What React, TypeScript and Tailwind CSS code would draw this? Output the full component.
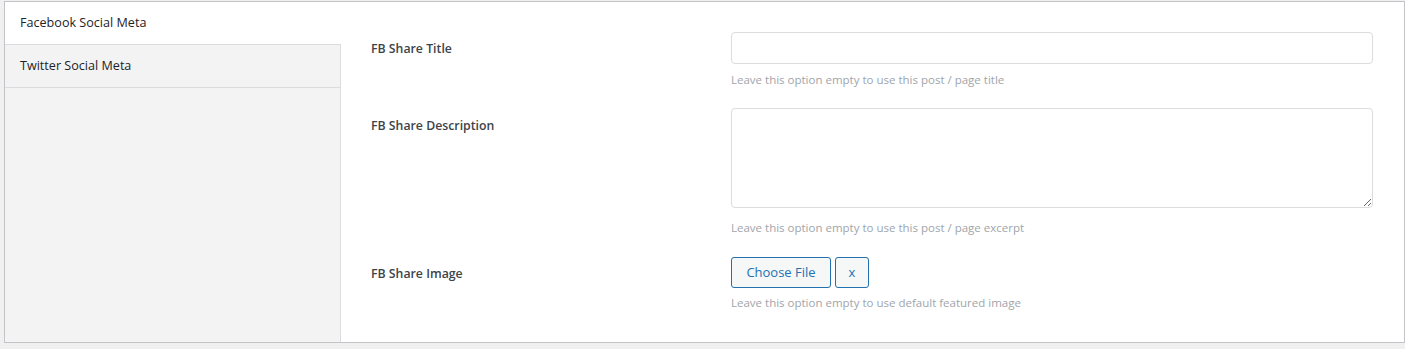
import clsx from 'clsx';

/**
 * Social meta box: vertical tabs on the left, the Facebook fields on the right.
 */

const TABS = ['Facebook Social Meta', 'Twitter Social Meta'];

function Tab({ label, active }: { label: string; active?: boolean }) {
  return (
    <div
      className={clsx(
        'flex h-[43px] items-center border-b border-[#dcdcde] pt-px pl-[15px] text-[12.6px] text-[#1d2327]',
        active ? 'bg-white' : 'border-r bg-[#f3f3f3]',
      )}
    >
      {label}
    </div>
  );
}

function Hint({ children, className }: { children: React.ReactNode; className?: string }) {
  return <p className={clsx('text-[11.5px] leading-[18px] text-[#a0a5aa]', className)}>{children}</p>;
}

const LABEL = 'text-[12.3px] leading-5 font-semibold text-[#3c434a]';
const BUTTON = 'h-[31px] rounded-[3px] border border-[#2271b1] bg-[#f6f7f7] text-[13px] text-[#2271b1]';

export default function App() {
  return (
    <div
      className="h-[349px] bg-[#f0f0f1] pt-px pl-1"
      style={{ fontFamily: '"Segoe UI", "Open Sans", sans-serif' }}
    >
      <div className="flex h-[342px] border border-[#c3c4c7] bg-white">
        <div className="flex w-[336px] flex-col">
          {TABS.map((t, i) => (
            <Tab key={t} label={t} active={i === 0} />
          ))}
          <div className="flex-1 border-r border-[#dcdcde] bg-[#f3f3f3]" />
        </div>

        <div className="flex-1 pt-[30px] pr-[31px] pl-[30px]">
          <div className="grid grid-cols-[360px_1fr]">
            <label className={clsx(LABEL, 'pt-[7px]')}>FB Share Title</label>
            <div>
              <input
                type="text"
                className="block h-8 w-full rounded-[4px] border border-[#dcdcde] bg-white px-2 text-[13px]"
              />
              <Hint className="mt-[7px]">Leave this option empty to use this post / page title</Hint>
            </div>
          </div>

          <div className="mt-[19px] grid grid-cols-[360px_1fr]">
            <label className={clsx(LABEL, 'pt-[8px]')}>FB Share Description</label>
            <div>
              <textarea className="block h-[100px] w-full rounded-[4px] border border-[#dcdcde] bg-white px-2 text-[13px]" />
              <Hint className="mt-[11px]">Leave this option empty to use this post / page excerpt</Hint>
            </div>
          </div>

          <div className="mt-[20px] grid grid-cols-[360px_1fr]">
            <label className={clsx(LABEL, 'pt-[7px]')}>FB Share Image</label>
            <div>
              <div className="flex gap-[4px]">
                <button type="button" className={clsx(BUTTON, 'w-[100px]')}>
                  Choose File
                </button>
                <button type="button" className={clsx(BUTTON, 'w-[34px]')}>
                  x
                </button>
              </div>
              <Hint className="mt-[6px]">Leave this option empty to use default featured image</Hint>
            </div>
          </div>
        </div>
      </div>
    </div>
  );
}
